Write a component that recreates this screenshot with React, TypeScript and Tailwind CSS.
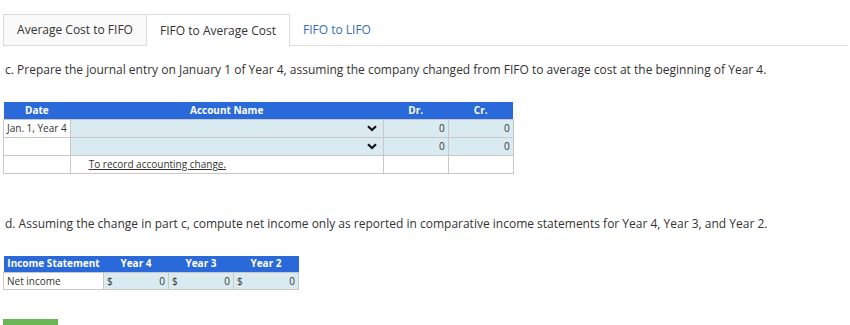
import React from 'react';

// Aba do topo
const Tab: React.FC<{ label: string; kind: 'done' | 'active' | 'idle' }> = ({ label, kind }) => {
  if (kind === 'active') {
    return (
      <div className="h-[32px] w-[144px] flex items-center justify-center border border-b-0 border-[#dcdcdc] bg-white text-[#333] -ml-px">
        {label}
      </div>
    );
  }
  if (kind === 'done') {
    return (
      <div className="h-[32px] w-[144px] flex items-center justify-center border border-[#dcdcdc] bg-[#fafafa] text-[#333]">
        {label}
      </div>
    );
  }
  return (
    <div className="h-[32px] flex-1 flex items-center pl-[13px] border-b border-[#dcdcdc] text-[#3a6bb5]">
      {label}
    </div>
  );
};

const Chevron = () => (
  <svg width="10" height="7" viewBox="0 0 10 7" className="shrink-0">
    <path d="M1 1.2 L5 5 L9 1.2" fill="none" stroke="#111" strokeWidth="2.2" />
  </svg>
);

const cell = 'border border-[#c8c8c8] h-[18px] px-[3px]';
const cell2 = 'border border-[#c8c8c8] h-[17px] px-[3px]';

export default function App() {
  return (
    <div className="w-[850px] h-[325px] overflow-hidden bg-white text-[#333] relative" style={{ fontFamily: '"Open Sans", sans-serif' }}>
      {/* abas */}
      <div className="flex pt-[14px] pl-[3px] pr-[2px] text-[12px]">
        <Tab label="Average Cost to FIFO" kind="done" />
        <Tab label="FIFO to Average Cost" kind="active" />
        <Tab label="FIFO to LIFO" kind="idle" />
      </div>

      {/* parte c */}
      <p className="mt-[15px] pl-[5px] text-[12px] leading-[18px]">
        c. Prepare the journal entry on January 1 of Year 4, assuming the company changed from FIFO to average cost at the beginning of Year 4.
      </p>

      <table className="mt-[23px] ml-[3px] border-collapse text-[10px] leading-[14px]">
        <thead>
          <tr className="bg-[#2a69d9] text-white font-bold h-[17px]">
            <th className="w-[66px] font-bold">Date</th>
            <th className="w-[313px] font-bold">Account Name</th>
            <th className="w-[65px] font-bold">Dr.</th>
            <th className="w-[65px] font-bold">Cr.</th>
          </tr>
        </thead>
        <tbody>
          <tr>
            <td className={`${cell} bg-white whitespace-nowrap`}>Jan. 1, Year 4</td>
            <td className={`${cell} bg-[#d9ebf1]`}>
              <div className="flex justify-end pr-[3px]"><Chevron /></div>
            </td>
            <td className={`${cell} bg-[#d9ebf1] text-right`}>0</td>
            <td className={`${cell} bg-[#d9ebf1] text-right`}>0</td>
          </tr>
          <tr>
            <td className={`${cell} bg-white`}></td>
            <td className={`${cell} bg-[#d9ebf1]`}>
              <div className="flex justify-end pr-[3px]"><Chevron /></div>
            </td>
            <td className={`${cell} bg-[#d9ebf1] text-right`}>0</td>
            <td className={`${cell} bg-[#d9ebf1] text-right`}>0</td>
          </tr>
          <tr>
            <td className={`${cell} bg-white`}></td>
            <td className={`${cell} bg-white pl-[18px]`}>
              <span className="underline">To record accounting change.</span>
            </td>
            <td className={`${cell} bg-white`}></td>
            <td className={`${cell} bg-white`}></td>
          </tr>
        </tbody>
      </table>

      {/* parte d */}
      <p className="mt-[41px] pl-[5px] text-[12px] leading-[18px]">
        d. Assuming the change in part c, compute net income only as reported in comparative income statements for Year 4, Year 3, and Year 2.
      </p>

      <table className="mt-[23px] ml-[3px] border-collapse text-[10px] leading-[13px]">
        <thead>
          <tr className="bg-[#2a69d9] text-white h-[17px]">
            <th className="w-[100px] font-bold whitespace-nowrap">Income Statement</th>
            <th className="w-[65px] font-bold">Year 4</th>
            <th className="w-[65px] font-bold">Year 3</th>
            <th className="w-[65px] font-bold">Year 2</th>
          </tr>
        </thead>
        <tbody>
          <tr>
            <td className={`${cell2} bg-white`}>Net income</td>
            {[0, 1, 2].map((i) => (
              <td key={i} className={`${cell2} bg-[#d9ebf1]`}>
                <div className="flex justify-between"><span>$</span><span>0</span></div>
              </td>
            ))}
          </tr>
        </tbody>
      </table>

      <div className="absolute left-[3px] top-[319px] w-[55px] h-[6px] bg-[#6ab655]" />
    </div>
  );
}
